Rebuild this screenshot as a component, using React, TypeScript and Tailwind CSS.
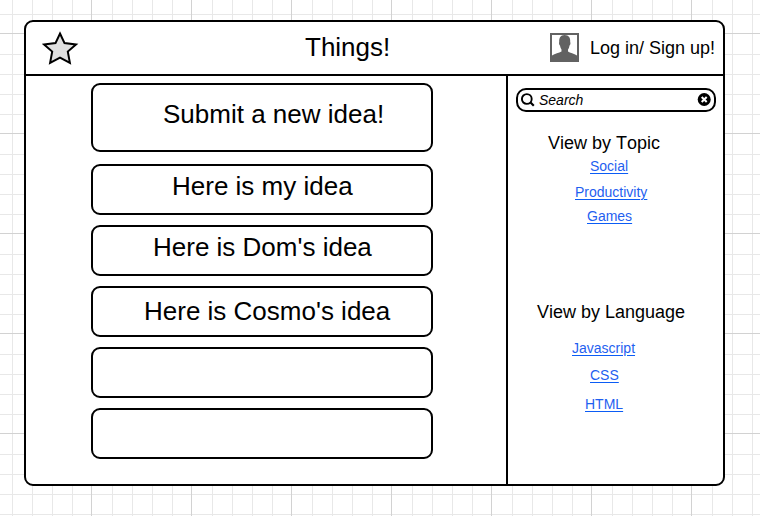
import React from "react";

const ideas = [
  { text: "Here is my idea", place: "pl-[79px] pt-[5px]" },
  { text: "Here is Dom's idea", place: "pl-[60px] pt-[5px]" },
  { text: "Here is Cosmo's idea", place: "pl-[51px] pt-[8px]" },
  { text: "", place: "" },
  { text: "", place: "" },
];

const topics = [
  { text: "Social", place: "ml-[74px] mt-[3px]" },
  { text: "Productivity", place: "ml-[59px] mt-[6px]" },
  { text: "Games", place: "ml-[71px] mt-[4px]" },
];

const languages = [
  { text: "Javascript", place: "ml-[56px] mt-[16px]" },
  { text: "CSS", place: "ml-[74px] mt-[7px]" },
  { text: "HTML", place: "ml-[69px] mt-[9px]" },
];

function Links({ items }: { items: { text: string; place: string }[] }) {
  return (
    <ul className="flex flex-col items-start">
      {items.map((item) => (
        <li key={item.text} className={item.place}>
          <a className="block whitespace-nowrap text-[14px] leading-5 text-[#1f5ff0] underline decoration-[#0b5cf5] decoration-1 underline-offset-2">
            {item.text}
          </a>
        </li>
      ))}
    </ul>
  );
}

export default function App() {
  return (
    <div className="flex h-[516px] w-[760px] flex-col overflow-hidden bg-white bg-[linear-gradient(to_right,transparent_91px,#d2d2d2_91px,#d2d2d2_92px,transparent_92px),linear-gradient(to_bottom,transparent_33px,#d2d2d2_33px,#d2d2d2_34px,transparent_34px),linear-gradient(to_right,transparent_12px,#e8e8e8_12px,#e8e8e8_13px,transparent_13px,transparent_32px,#e8e8e8_32px,#e8e8e8_33px,transparent_33px,transparent_52px,#e8e8e8_52px,#e8e8e8_53px,transparent_53px,transparent_72px,#e8e8e8_72px,#e8e8e8_73px,transparent_73px),linear-gradient(to_bottom,transparent_14px,#e8e8e8_14px,#e8e8e8_15px,transparent_15px,transparent_54px,#e8e8e8_54px,#e8e8e8_55px,transparent_55px,transparent_74px,#e8e8e8_74px,#e8e8e8_75px,transparent_75px,transparent_94px,#e8e8e8_94px,#e8e8e8_95px,transparent_95px)] bg-[size:100px_100px] pl-[24px] pt-[20px] font-['Liberation_Sans',Arial,sans-serif] text-black [font-kerning:none]">
      <div className="flex h-[466px] w-[701px] flex-col rounded-[9px] border-2 border-black bg-white">
        <header className="flex h-[54px] shrink-0 items-start border-b-2 border-black">
          <svg className="ml-[16px] mt-[8px] block shrink-0" width="38" height="36" viewBox="0 0 38 36">
            <path d="M18 3.5 22.5 13.1 34 14.5 25.8 21.6 27.9 32.8 18 27.7 8.1 32.8 10.2 21.6 2 14.5 13.5 13.1Z" fill="#e0e0e0" stroke="#000" strokeWidth="2" />
          </svg>
          <h1 className="ml-[225px] mt-[10px] w-[85px] whitespace-nowrap text-[26px] leading-[30px]">Things!</h1>
          <svg className="ml-[160px] mt-[11px] block shrink-0" width="29" height="29" viewBox="0 0 29 29">
            <rect x="1" y="1" width="27" height="27" fill="#fff" stroke="#626262" strokeWidth="2" />
            <path d="M14.5 2C10.5 2 9 5 9.2 9C8.7 10 9.2 12 10 12.5C10.3 14.5 11 15.5 11.5 16.5V18.5C9 20 5 20.5 2 22.5V28H27V22.5C24 20.5 20 20 18 18.5V16.5C18.7 15.5 19.2 14.5 19.5 12.5C20.3 12 20.8 10 20.2 9C20.5 5 19 2 14.5 2Z" fill="#626262" />
          </svg>
          <a className="ml-[11px] mt-[11px] whitespace-nowrap text-[18px] leading-[30px]">Log in/ Sign up!</a>
        </header>
        <div className="flex min-h-0 flex-1">
          <main className="flex w-[480px] shrink-0 flex-col gap-[10px] pl-[65px] pt-[7px]">
            <div className="mb-[2px] h-[69px] w-[342px] whitespace-nowrap rounded-[9px] border-2 border-black pl-[70px] pt-[14px] text-[26px] leading-[30px]">
              Submit a new idea!
            </div>
            {ideas.map((idea, i) => (
              <div key={i} className={`h-[51px] w-[342px] whitespace-nowrap rounded-[9px] border-2 border-black text-[26px] leading-[30px] ${idea.place}`}>
                {idea.text}
              </div>
            ))}
          </main>
          <aside className="flex flex-1 flex-col border-l-2 border-black pl-[8px] pt-[12px]">
            <div className="flex h-[24px] w-[200px] shrink-0 items-center rounded-[10px] border-2 border-black">
              <svg className="ml-[2px] block" width="16" height="16" viewBox="0 0 16 16" fill="none" stroke="#000">
                <circle cx="6.8" cy="7" r="4.9" strokeWidth="1.9" />
                <path d="M10.3 10.3 13.8 13.8" strokeWidth="2.2" />
              </svg>
              <span className="ml-[3px] text-[14px] italic leading-5">Search</span>
              <svg className="ml-auto mr-[3px] block" width="14" height="14" viewBox="0 0 14 14">
                <circle cx="7.2" cy="6.5" r="6.5" />
                <path d="M4.7 4 9.7 9M9.7 4 4.7 9" stroke="#fff" strokeWidth="2" />
              </svg>
            </div>
            <nav className="h-[169px] shrink-0 pt-[16px]">
              <h2 className="ml-[32px] whitespace-nowrap text-[18px] leading-[30px]">View by Topic</h2>
              <div className="-mt-[5px]">
                <Links items={topics} />
              </div>
            </nav>
            <nav className="pt-[16px]">
              <h2 className="ml-[21px] whitespace-nowrap text-[18px] leading-[30px]">View by Language</h2>
              <div className="-mt-[5px]">
                <Links items={languages} />
              </div>
            </nav>
          </aside>
        </div>
      </div>
    </div>
  );
}
